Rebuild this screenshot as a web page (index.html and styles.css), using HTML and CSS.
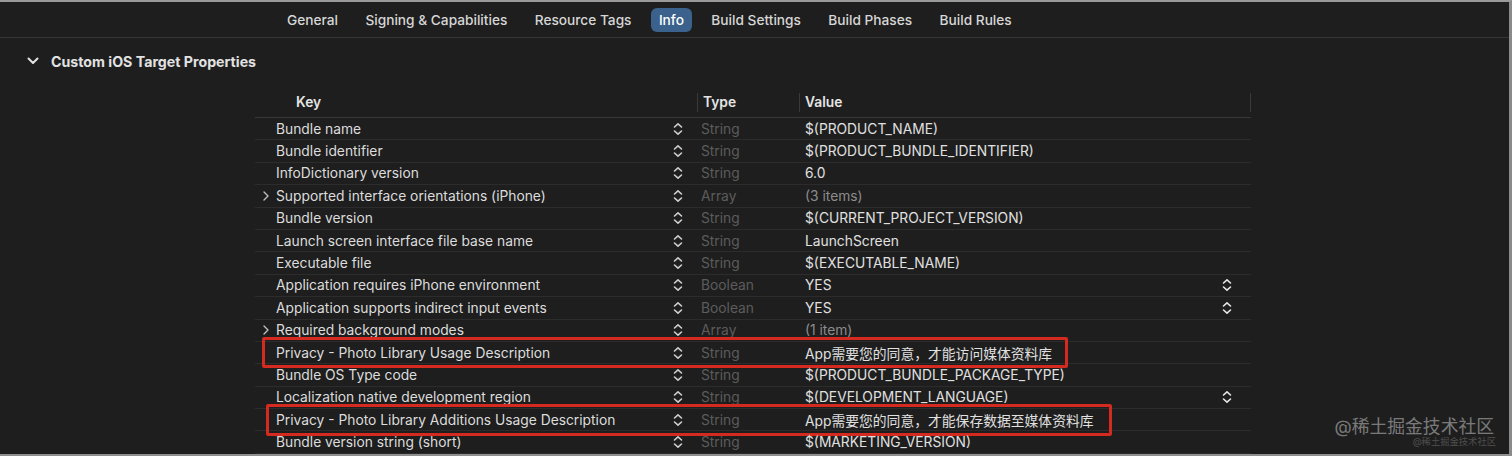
FILE: index.html
```html
<!DOCTYPE html>
<html lang="en">
<head>
<meta charset="utf-8">
<title>Info</title>
<link rel="stylesheet" href="styles.css">
</head>
<body>
<div class="window">
  <nav class="tabs">
    <span class="tab">General</span>
    <span class="tab">Signing &amp; Capabilities</span>
    <span class="tab">Resource Tags</span>
    <span class="tab active">Info</span>
    <span class="tab">Build Settings</span>
    <span class="tab">Build Phases</span>
    <span class="tab">Build Rules</span>
  </nav>

  <div class="section-head">
    <svg class="sec-chev" width="12" height="8" viewBox="0 0 12 8"><path d="M1.5 1.5 L6 6 L10.5 1.5" fill="none" stroke="#e2e2e2" stroke-width="2" stroke-linecap="round" stroke-linejoin="round"/></svg>
    <span class="section-title">Custom iOS Target Properties</span>
  </div>

  <div class="table">
    <div class="thead">
      <div class="th th-key">Key</div>
      <div class="th th-type">Type</div>
      <div class="th th-value">Value</div>
    </div>

    <div class="row">
      <div class="c-key"><span class="disc"></span><span class="k">Bundle name</span><span class="step"><svg width="10" height="14" viewBox="0 0 10 14"><path d="M1.5 5 L5 1.8 L8.5 5 M1.5 9 L5 12.2 L8.5 9" fill="none" stroke="#cfcfcf" stroke-width="1.6" stroke-linecap="round" stroke-linejoin="round"/></svg></span></div>
      <div class="c-type">String</div>
      <div class="c-val"><span class="v">$(PRODUCT_NAME)</span></div>
    </div>
    <div class="row">
      <div class="c-key"><span class="disc"></span><span class="k">Bundle identifier</span><span class="step"><svg width="10" height="14" viewBox="0 0 10 14"><path d="M1.5 5 L5 1.8 L8.5 5 M1.5 9 L5 12.2 L8.5 9" fill="none" stroke="#cfcfcf" stroke-width="1.6" stroke-linecap="round" stroke-linejoin="round"/></svg></span></div>
      <div class="c-type">String</div>
      <div class="c-val"><span class="v">$(PRODUCT_BUNDLE_IDENTIFIER)</span></div>
    </div>
    <div class="row">
      <div class="c-key"><span class="disc"></span><span class="k">InfoDictionary version</span><span class="step"><svg width="10" height="14" viewBox="0 0 10 14"><path d="M1.5 5 L5 1.8 L8.5 5 M1.5 9 L5 12.2 L8.5 9" fill="none" stroke="#cfcfcf" stroke-width="1.6" stroke-linecap="round" stroke-linejoin="round"/></svg></span></div>
      <div class="c-type">String</div>
      <div class="c-val"><span class="v">6.0</span></div>
    </div>
    <div class="row">
      <div class="c-key"><span class="disc"><svg width="6" height="10" viewBox="0 0 6 10"><path d="M1 1 L5 5 L1 9" fill="none" stroke="#bdbdbd" stroke-width="1.4" stroke-linecap="round" stroke-linejoin="round"/></svg></span><span class="k">Supported interface orientations (iPhone)</span><span class="step"><svg width="10" height="14" viewBox="0 0 10 14"><path d="M1.5 5 L5 1.8 L8.5 5 M1.5 9 L5 12.2 L8.5 9" fill="none" stroke="#cfcfcf" stroke-width="1.6" stroke-linecap="round" stroke-linejoin="round"/></svg></span></div>
      <div class="c-type">Array</div>
      <div class="c-val"><span class="v dim">(3 items)</span></div>
    </div>
    <div class="row">
      <div class="c-key"><span class="disc"></span><span class="k">Bundle version</span><span class="step"><svg width="10" height="14" viewBox="0 0 10 14"><path d="M1.5 5 L5 1.8 L8.5 5 M1.5 9 L5 12.2 L8.5 9" fill="none" stroke="#cfcfcf" stroke-width="1.6" stroke-linecap="round" stroke-linejoin="round"/></svg></span></div>
      <div class="c-type">String</div>
      <div class="c-val"><span class="v">$(CURRENT_PROJECT_VERSION)</span></div>
    </div>
    <div class="row">
      <div class="c-key"><span class="disc"></span><span class="k">Launch screen interface file base name</span><span class="step"><svg width="10" height="14" viewBox="0 0 10 14"><path d="M1.5 5 L5 1.8 L8.5 5 M1.5 9 L5 12.2 L8.5 9" fill="none" stroke="#cfcfcf" stroke-width="1.6" stroke-linecap="round" stroke-linejoin="round"/></svg></span></div>
      <div class="c-type">String</div>
      <div class="c-val"><span class="v">LaunchScreen</span></div>
    </div>
    <div class="row">
      <div class="c-key"><span class="disc"></span><span class="k">Executable file</span><span class="step"><svg width="10" height="14" viewBox="0 0 10 14"><path d="M1.5 5 L5 1.8 L8.5 5 M1.5 9 L5 12.2 L8.5 9" fill="none" stroke="#cfcfcf" stroke-width="1.6" stroke-linecap="round" stroke-linejoin="round"/></svg></span></div>
      <div class="c-type">String</div>
      <div class="c-val"><span class="v">$(EXECUTABLE_NAME)</span></div>
    </div>
    <div class="row">
      <div class="c-key"><span class="disc"></span><span class="k">Application requires iPhone environment</span><span class="step"><svg width="10" height="14" viewBox="0 0 10 14"><path d="M1.5 5 L5 1.8 L8.5 5 M1.5 9 L5 12.2 L8.5 9" fill="none" stroke="#cfcfcf" stroke-width="1.6" stroke-linecap="round" stroke-linejoin="round"/></svg></span></div>
      <div class="c-type">Boolean</div>
      <div class="c-val"><span class="v">YES</span><span class="vstep"><svg width="10" height="14" viewBox="0 0 10 14"><path d="M1.5 5 L5 1.8 L8.5 5 M1.5 9 L5 12.2 L8.5 9" fill="none" stroke="#e6e6e6" stroke-width="1.6" stroke-linecap="round" stroke-linejoin="round"/></svg></span></div>
    </div>
    <div class="row">
      <div class="c-key"><span class="disc"></span><span class="k">Application supports indirect input events</span><span class="step"><svg width="10" height="14" viewBox="0 0 10 14"><path d="M1.5 5 L5 1.8 L8.5 5 M1.5 9 L5 12.2 L8.5 9" fill="none" stroke="#cfcfcf" stroke-width="1.6" stroke-linecap="round" stroke-linejoin="round"/></svg></span></div>
      <div class="c-type">Boolean</div>
      <div class="c-val"><span class="v">YES</span><span class="vstep"><svg width="10" height="14" viewBox="0 0 10 14"><path d="M1.5 5 L5 1.8 L8.5 5 M1.5 9 L5 12.2 L8.5 9" fill="none" stroke="#e6e6e6" stroke-width="1.6" stroke-linecap="round" stroke-linejoin="round"/></svg></span></div>
    </div>
    <div class="row">
      <div class="c-key"><span class="disc"><svg width="6" height="10" viewBox="0 0 6 10"><path d="M1 1 L5 5 L1 9" fill="none" stroke="#bdbdbd" stroke-width="1.4" stroke-linecap="round" stroke-linejoin="round"/></svg></span><span class="k">Required background modes</span><span class="step"><svg width="10" height="14" viewBox="0 0 10 14"><path d="M1.5 5 L5 1.8 L8.5 5 M1.5 9 L5 12.2 L8.5 9" fill="none" stroke="#cfcfcf" stroke-width="1.6" stroke-linecap="round" stroke-linejoin="round"/></svg></span></div>
      <div class="c-type">Array</div>
      <div class="c-val"><span class="v dim">(1 item)</span></div>
    </div>
    <div class="row">
      <div class="c-key"><span class="disc"></span><span class="k">Privacy - Photo Library Usage Description</span><span class="step"><svg width="10" height="14" viewBox="0 0 10 14"><path d="M1.5 5 L5 1.8 L8.5 5 M1.5 9 L5 12.2 L8.5 9" fill="none" stroke="#cfcfcf" stroke-width="1.6" stroke-linecap="round" stroke-linejoin="round"/></svg></span></div>
      <div class="c-type">String</div>
      <div class="c-val"><span class="v">App需要您的同意，才能访问媒体资料库</span></div>
      <span class="mark mark-a"></span>
    </div>
    <div class="row">
      <div class="c-key"><span class="disc"></span><span class="k">Bundle OS Type code</span><span class="step"><svg width="10" height="14" viewBox="0 0 10 14"><path d="M1.5 5 L5 1.8 L8.5 5 M1.5 9 L5 12.2 L8.5 9" fill="none" stroke="#cfcfcf" stroke-width="1.6" stroke-linecap="round" stroke-linejoin="round"/></svg></span></div>
      <div class="c-type">String</div>
      <div class="c-val"><span class="v">$(PRODUCT_BUNDLE_PACKAGE_TYPE)</span></div>
    </div>
    <div class="row">
      <div class="c-key"><span class="disc"></span><span class="k">Localization native development region</span><span class="step"><svg width="10" height="14" viewBox="0 0 10 14"><path d="M1.5 5 L5 1.8 L8.5 5 M1.5 9 L5 12.2 L8.5 9" fill="none" stroke="#cfcfcf" stroke-width="1.6" stroke-linecap="round" stroke-linejoin="round"/></svg></span></div>
      <div class="c-type">String</div>
      <div class="c-val"><span class="v">$(DEVELOPMENT_LANGUAGE)</span><span class="vstep"><svg width="10" height="14" viewBox="0 0 10 14"><path d="M1.5 5 L5 1.8 L8.5 5 M1.5 9 L5 12.2 L8.5 9" fill="none" stroke="#e6e6e6" stroke-width="1.6" stroke-linecap="round" stroke-linejoin="round"/></svg></span></div>
    </div>
    <div class="row">
      <div class="c-key"><span class="disc"></span><span class="k">Privacy - Photo Library Additions Usage Description</span><span class="step"><svg width="10" height="14" viewBox="0 0 10 14"><path d="M1.5 5 L5 1.8 L8.5 5 M1.5 9 L5 12.2 L8.5 9" fill="none" stroke="#cfcfcf" stroke-width="1.6" stroke-linecap="round" stroke-linejoin="round"/></svg></span></div>
      <div class="c-type">String</div>
      <div class="c-val"><span class="v">App需要您的同意，才能保存数据至媒体资料库</span></div>
      <span class="mark mark-b"></span>
    </div>
    <div class="row">
      <div class="c-key"><span class="disc"></span><span class="k">Bundle version string (short)</span><span class="step"><svg width="10" height="14" viewBox="0 0 10 14"><path d="M1.5 5 L5 1.8 L8.5 5 M1.5 9 L5 12.2 L8.5 9" fill="none" stroke="#cfcfcf" stroke-width="1.6" stroke-linecap="round" stroke-linejoin="round"/></svg></span></div>
      <div class="c-type">String</div>
      <div class="c-val"><span class="v">$(MARKETING_VERSION)</span></div>
    </div>
  </div>

  <div class="watermark">
    <span class="wm-big">@稀土掘金技术社区</span>
    <span class="wm-small">@稀土掘金技术社区</span>
  </div>
</div>
</body>
</html>
```

FILE: styles.css
```css
* { box-sizing: border-box; }

html, body {
  margin: 0;
  padding: 0;
  background: #1f1f1f;
}

body {
  font-family: "Inter", "Noto Sans CJK SC", sans-serif;
  color: #dedede;
  font-size: 13.8px;
}

.window {
  position: relative;
  width: 1512px;
  height: 456px;
  overflow: hidden;
  background: #1e1e1e;
  border-top: 2px solid #9a9a9a;
  border-right: 3px solid #8a8a8a;
  border-bottom: 2px solid #8f8f8f;
}

.tabs {
  display: flex;
  align-items: center;
  gap: 11.4px;
  height: 36px;
  padding-left: 279px;
  border-bottom: 1px solid #363636;
}

.tab {
  padding: 4px 8px;
  border-radius: 6px;
  font-size: 13.7px;
  font-weight: 500;
  color: #d6d6d6;
  line-height: 16px;
}

.tab.active {
  background: #3a628c;
  color: #ffffff;
}

.section-head {
  display: flex;
  align-items: center;
  height: 46px;
  padding-left: 27px;
  gap: 12px;
}

.sec-chev { display: block; }

.section-title {
  font-size: 14.2px;
  font-weight: 700;
  color: #e2e2e2;
}

.table {
  margin-left: 255px;
  width: 996px;
  margin-top: 5px;
}

.thead {
  display: grid;
  grid-template-columns: 442px 102px 1fr;
  height: 29px;
  align-items: start;
  padding-top: 4px;
  border-bottom: 1px solid #383838;
}

.th {
  font-size: 13.8px;
  font-weight: 600;
  color: #e4e4e4;
  height: 19px;
  line-height: 19px;
}

.th-key { padding-left: 41px; }

.th-type, .th-value {
  border-left: 1px solid #3a3a3a;
  padding-left: 5px;
}

.th-value { border-right: 1px solid #3a3a3a; }

.row {
  position: relative;
  display: grid;
  grid-template-columns: 442px 102px 1fr;
  height: 22.4px;
  align-items: center;
  border-bottom: 1px solid #2c2c2c;
}

.c-key {
  display: flex;
  align-items: center;
  padding-right: 14px;
}

.disc {
  width: 21px;
  display: flex;
  justify-content: flex-start;
  padding-left: 8px;
}

.disc svg { display: block; }

.k {
  flex: 1;
  color: #dcdcdc;
  white-space: nowrap;
}

.step, .vstep { display: flex; }
.step svg, .vstep svg { display: block; }

.c-type {
  padding-left: 4px;
  color: #5c5c5c;
}

.c-val {
  display: flex;
  align-items: center;
  padding-left: 6px;
  padding-right: 19px;
}

.v {
  flex: 1;
  color: #e0e0e0;
  white-space: nowrap;
}

.v.dim { color: #8c8c8c; }

.mark {
  position: absolute;
  border: 3px solid #d42a20;
  border-radius: 2px;
  pointer-events: none;
}

.mark-a {
  left: 7px;
  top: -5px;
  width: 806px;
  height: 31px;
}

.mark-b {
  left: 11px;
  top: -5px;
  width: 846px;
  height: 32px;
}

.watermark {
  position: absolute;
  right: 15px;
  bottom: 7px;
  display: flex;
  flex-direction: column;
  align-items: flex-end;
}

.wm-big {
  font-size: 17.8px;
  color: rgba(255, 255, 255, 0.42);
  line-height: 20px;
}

.wm-small {
  font-size: 9.3px;
  color: rgba(255, 255, 255, 0.22);
  line-height: 10px;
  margin-top: 0;
  margin-right: -2px;
}
```
